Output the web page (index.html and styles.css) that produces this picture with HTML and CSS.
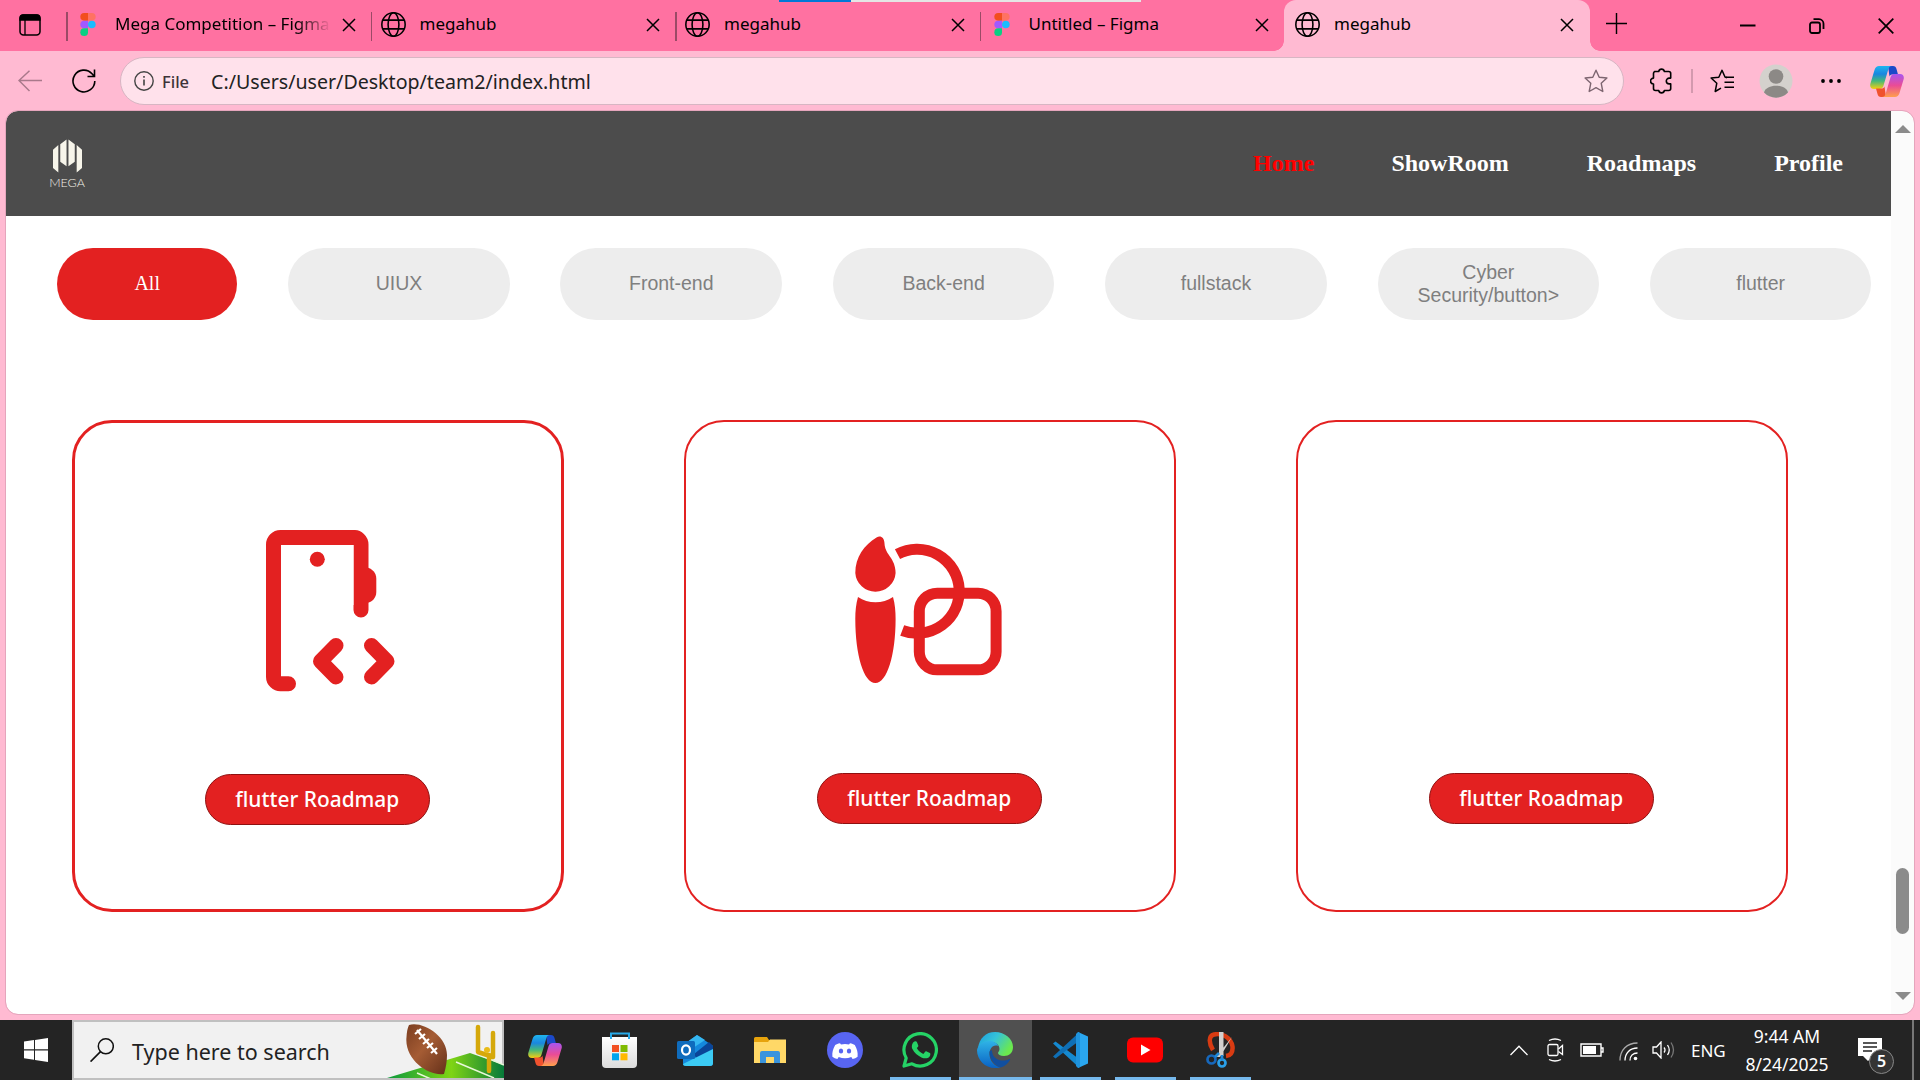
FILE: index.html
```html
<!DOCTYPE html>
<html lang="en">
<head>
<meta charset="utf-8">
<title>megahub</title>
<link rel="stylesheet" href="styles.css">
</head>
<body>
<svg class="defs" width="0" height="0">
  <defs>
    <linearGradient id="cpA" x1="0" y1="0" x2="0" y2="1"><stop offset="0" stop-color="#1fb5ee"/><stop offset=".35" stop-color="#1a86e0"/><stop offset=".65" stop-color="#44b87a"/><stop offset="1" stop-color="#f6cf10"/></linearGradient>
    <linearGradient id="cpB" x1="0" y1="0" x2="0" y2="1"><stop offset="0" stop-color="#a855f0"/><stop offset=".5" stop-color="#ea4c96"/><stop offset="1" stop-color="#ffa04c"/></linearGradient>
    <linearGradient id="edA" x1="0" y1="0" x2="1" y2=".5"><stop offset="0" stop-color="#1b9de0"/><stop offset=".5" stop-color="#35c3d8"/><stop offset="1" stop-color="#6be94e"/></linearGradient>
    <linearGradient id="edB" x1="0" y1="0" x2="0" y2="1"><stop offset="0" stop-color="#2fb3e6"/><stop offset="1" stop-color="#0a62c4"/></linearGradient>
    <linearGradient id="ball" x1="0" y1="0" x2="1" y2="1"><stop offset="0" stop-color="#7a3d20"/><stop offset=".45" stop-color="#a55c34"/><stop offset="1" stop-color="#64301a"/></linearGradient>
    <linearGradient id="field" x1="0" y1="0" x2="1" y2="0"><stop offset="0" stop-color="#0c9a3c"/><stop offset=".55" stop-color="#7fd414"/><stop offset="1" stop-color="#067a3a"/></linearGradient>
    <linearGradient id="bag" x1="0" y1="0" x2="0" y2="1"><stop offset="0" stop-color="#fff"/><stop offset="1" stop-color="#dcdcdc"/></linearGradient>
    <symbol id="globe" viewBox="0 0 24 24"><g fill="none" stroke="currentColor" stroke-width="1.5"><circle cx="12" cy="12" r="11.2"/><ellipse cx="12" cy="12" rx="5.2" ry="11.2"/><path d="M1.8 7.8h20.4M1.8 16.2h20.4"/></g></symbol>
    <symbol id="cross" viewBox="0 0 14 14"><path d="M1 1l12 12M13 1L1 13" fill="none" stroke="currentColor" stroke-width="1.5"/></symbol>
    <symbol id="figma" viewBox="0 0 16 24"><path d="M8 0H4a4 4 0 000 8h4z" fill="#f24e1e"/><path d="M8 0h4a4 4 0 010 8H8z" fill="#ff7262"/><path d="M8 8H4a4 4 0 000 8h4z" fill="#a259ff"/><circle cx="12" cy="12" r="4" fill="#1abcfe"/><path d="M8 16H4a4 4 0 104 4z" fill="#0acf83"/></symbol>
    <symbol id="copilot" viewBox="0 0 34 31"><path d="M18 0h5c2 0 3 1 3.500 3l1.500 5.500h-5c-2 0-3 .5-3.500 2z" fill="#1b49c9"/><path d="M9 0h13c-2 0-3 1-3.600 3l-5 17c-.6 2-2 3-4 3H4C1 23-.3 21 .3 18L4.500 4C5.200 1.500 7 0 9 0z" fill="url(#cpA)"/><path d="M16 31h-5c-2 0-3-1-3.500-3L6 22.500h5c2 0 3-.5 3.500-2z" fill="#f0522e"/><path d="M25 31H12c2 0 3-1 3.600-3l5-17c.6-2 2-3 4-3H30c3 0 4.300 2 3.700 5l-4.200 14c-.7 2.500-2.500 4-4.500 4z" fill="url(#cpB)"/></symbol>
  </defs>
</svg>

<header class="tabstrip">
  <svg class="workspaces" viewBox="0 0 22 22"><rect x="1" y="1" width="20" height="20" rx="3.500" fill="none" stroke="#000" stroke-width="1.500"/><path d="M1 6V4a3 3 0 013-3h14a3 3 0 013 3v2zM6 6v15" stroke="#000" stroke-width="1.300"/></svg>
  <div class="tab"><svg class="fig"><use href="#figma"/></svg><span class="title fade">Mega Competition – Figma</span><svg class="x"><use href="#cross"/></svg></div>
  <div class="tab"><svg class="globe"><use href="#globe"/></svg><span class="title">megahub</span><svg class="x"><use href="#cross"/></svg></div>
  <div class="tab"><svg class="globe"><use href="#globe"/></svg><span class="title">megahub</span><svg class="x"><use href="#cross"/></svg></div>
  <div class="tab"><svg class="fig"><use href="#figma"/></svg><span class="title">Untitled – Figma</span><svg class="x"><use href="#cross"/></svg></div>
  <div class="tab active"><svg class="globe"><use href="#globe"/></svg><span class="title">megahub</span><svg class="x"><use href="#cross"/></svg></div>
  <svg class="plus" viewBox="0 0 22 22"><path d="M11 0v22M0 11h22" stroke="#000" stroke-width="1.500"/></svg>
  <div class="window-buttons">
    <svg viewBox="0 0 16 16"><path d="M0 7.500h15.500" stroke="#000" stroke-width="2"/></svg>
    <svg viewBox="0 0 16 16"><g fill="none" stroke="#000" stroke-width="1.800"><rect x="1" y="4.500" width="10" height="10.500" rx="2"/><path d="M4.500 1.200H10a4.500 4.500 0 014.500 4.500V11"/></g></svg>
    <svg viewBox="0 0 16 16"><path d="M.7.700l14.600 14.600M15.300.700L.7 15.300" stroke="#000" stroke-width="1.700"/></svg>
  </div>
  <div class="progress"><i></i></div>
</header>

<div class="toolbar">
  <svg class="back" viewBox="0 0 24 22"><path d="M24 10.500H1M11.500.700L1 10.500l10.500 10.500" fill="none" stroke="#a9798b" stroke-width="1.500"/></svg>
  <svg class="reload" viewBox="0 0 24 24"><path d="M22.800 12A10.900 10.900 0 1120 4.700l2 2.300M22.500.500v7h-7" fill="none" stroke="#000" stroke-width="1.600"/></svg>
  <div class="address">
    <svg class="info" viewBox="0 0 20 20"><circle cx="10" cy="10" r="9.200" fill="none" stroke="#444" stroke-width="1.400"/><path d="M10 8.500v6M10 5v1.700" stroke="#444" stroke-width="1.600"/></svg>
    <span class="scheme">File</span>
    <span class="url">C:/Users/user/Desktop/team2/index.html</span>
    <svg class="star" viewBox="0 0 24 24"><path d="M12 1.200l3.200 7 7.700.8-5.700 5.200 1.600 8.300-6.800-3.800-6.800 3.800 1.600-8.300L1.100 9l7.700-.8z" fill="none" stroke="#7d6570" stroke-width="1.400" stroke-linejoin="round"/></svg>
  </div>
  <svg class="puzzle" viewBox="0 0 22 28"><path d="M4.500 4.500h4.200a2.900 2.900 0 015.700 0h4.300a2 2 0 012 2v4.600h-1.500a2.900 2.900 0 000 5.800h1.500v4.600a2 2 0 01-2 2h-4.300a2.900 2.900 0 01-5.700 0H5.500a2 2 0 01-2-2V17a2.900 2.900 0 010-5.900V6.500a2 2 0 012-2z" fill="none" stroke="#000" stroke-width="1.600" stroke-linejoin="round"/></svg>
  <i class="sep"></i>
  <svg class="favs" viewBox="0 0 24 24"><g fill="none" stroke="#000" stroke-width="1.500" stroke-linejoin="round"><path d="M17 8.800L15 8 12 1.200 8.800 8.200 1.100 9l5.700 5.200L5.200 22.500l5.800-3.300"/><path d="M16 8.200h8M14.500 13.200H24M14.500 18.200H24"/></g></svg>
  <svg class="avatar" viewBox="0 0 34 34"><circle cx="17" cy="17" r="16.500" fill="#d4d1cd"/><circle cx="17" cy="12.500" r="7.300" fill="#8c8986"/><path d="M5 28.500c2-9 22-9 24 0a16.500 16.500 0 01-24 0z" fill="#8c8986"/></svg>
  <svg class="dots" viewBox="0 0 20 4"><circle cx="2" cy="2" r="1.900"/><circle cx="10" cy="2" r="1.900"/><circle cx="18" cy="2" r="1.900"/></svg>
  <svg class="cp"><use href="#copilot"/></svg>
</div>

<main class="viewport">
  <div class="page">
    <nav class="navbar">
      <div class="logo">
        <svg viewBox="0 0 30 34"><path d="M0 10.500l5.500-4.800V34L0 29.500zM7.500 4.800L14 0v27.500L7.500 23zM16 0l6.500 4.800V23L16 27.500zM24.500 5.700l5.500 4.800v19L24.500 34z" fill="#f7f5ea"/></svg>
        <span>MEGA</span>
      </div>
      <div class="links"><a class="current">Home</a><a>ShowRoom</a><a>Roadmaps</a><a>Profile</a></div>
    </nav>
    <div class="filters">
      <button class="all">All</button>
      <button>UIUX</button>
      <button>Front-end</button>
      <button>Back-end</button>
      <button>fullstack</button>
      <button class="two-line">Cyber<br>Security/button&gt;</button>
      <button>flutter</button>
    </div>
    <div class="cards">
      <section class="card hover">
        <svg class="art" viewBox="0 0 162 162"><g fill="none" stroke="#e32121" stroke-width="15" stroke-linecap="round" stroke-linejoin="round"><path d="M38.500 153.700h-7.500a7 7 0 01-7.500-7V14.500a7 7 0 017-7h73a7 7 0 017.500 7V80"/><path d="M86 115.500L70.500 131.200 86 147M121.500 115.500l15.500 15.700L121.500 147"/></g><path d="M31 15h72.500v60H31z" fill="#fff"/><path d="M31 75h20v71H31z" fill="#fff"/><circle cx="67.300" cy="29.300" r="7.500" fill="#e32121"/><path d="M117 37.500c5 1 9.300 5.500 9.300 11v13.500c0 6-4.300 10-9.300 11z" fill="#e32121"/></svg>
        <button>flutter Roadmap</button>
      </section>
      <section class="card">
        <svg class="art" viewBox="0 0 162 162"><g fill="#e32121"><path d="M21.500 7.500c4-2.500 7.500 0 7.900 5 .3 9 5 12 8 18 2.500 4.500 3.200 9 3.200 12.500a20.200 20.200 0 01-40.300 0c0-16 9-28 21.200-35.500z"/><path d="M3 67c10 7 25 7 35 0 2 7 2.600 14 2.600 22 0 36-8.500 64-20.200 64S.3 125 .3 89c0-8 .7-15 2.700-22z"/></g><g fill="none" stroke="#e32121" stroke-width="11"><path d="M42.500 24.200A42 42 0 1147.200 100.500"/><rect x="64.300" y="63.200" width="76.800" height="76.600" rx="18"/></g></svg>
        <button>flutter Roadmap</button>
      </section>
      <section class="card">
        <div class="art"></div>
        <button>flutter Roadmap</button>
      </section>
    </div>
  </div>
  <div class="scrollbar">
    <svg viewBox="0 0 16 8"><path d="M0 8L8 0l8 8z" fill="#8b8b8b"/></svg>
    <i></i>
    <svg viewBox="0 0 16 8"><path d="M0 0h16L8 8z" fill="#8b8b8b"/></svg>
  </div>
</main>

<footer class="taskbar">
  <div class="start"><svg viewBox="0 0 24 24"><path d="M0 3.500l10-1.400v9.200H0zM11 2l13-2v11.300H11zM0 12.400h10v9.300L0 20.300zM11 12.400h13V24l-13-2z" fill="#fff"/></svg></div>
  <div class="search">
    <svg class="lens" viewBox="0 0 24 24"><circle cx="15.800" cy="8.300" r="7.500" fill="none" stroke="#111" stroke-width="1.500"/><path d="M10.500 13.600L.5 23.600" stroke="#111" stroke-width="1.700"/></svg>
    <span>Type here to search</span>
    <svg class="doodle" viewBox="0 0 117 56"><path d="M0 56L83 31l34 12v13z" fill="url(#field)"/><path d="M30 51l14 6M69 40l38 16M93 33l24 10" stroke="#e8f8d8" stroke-width="1.500"/><g fill="none" stroke="#d5a80a" stroke-width="4.500" stroke-linecap="round" stroke-linejoin="round"><path d="M91 5v25l15 5V11M102 33v16"/></g><circle cx="100" cy="28" r="3" fill="#e8bb18"/><path d="M22 3C36-1 60 14 60 33c0 6-1 12-3 19C44 55 17 39 19.500 15c.3-5 1-9 2.500-12z" fill="url(#ball)"/><path d="M30 8l20 24M28 12l6-5M32 17l6-5M36 22l6-5M40 26l6-5M44 31l6-5" stroke="#fff" stroke-width="2.200"/></svg>
  </div>
  <div class="apps">
    <div><svg viewBox="0 0 36 36"><use href="#copilot" x="1" y="3" width="34" height="31"/></svg></div>
    <div><svg viewBox="0 0 36 36"><path d="M9 7V1.500h18V7" fill="none" stroke="#29aae8" stroke-width="2"/><path d="M0 5h35v27a4 4 0 01-4 4H4a4 4 0 01-4-4z" fill="url(#bag)"/><path d="M9 7V2M27 7V2" stroke="#29aae8" stroke-width="2"/><path d="M10 13h7v7h-7z" fill="#f25022"/><path d="M18.500 13h7v7h-7z" fill="#7fba00"/><path d="M10 21.300h7v7h-7z" fill="#00a4ef"/><path d="M18.500 21.300h7v7h-7z" fill="#ffb900"/></svg></div>
    <div><svg viewBox="0 0 36 36"><path d="M6 13L20 3l16 11v17a3 3 0 01-3 3H9a3 3 0 01-3-3z" fill="#1489dd"/><path d="M6 13L20 3l8 5L10 20z" fill="#35b7f1"/><path d="M17 22l15-12 4 4v4L20 28z" fill="#0a4598"/><path d="M36 17v14a3 3 0 01-3 3H9c-2 0-3-1-3-2z" fill="#3ccbf4"/><rect y="9" width="18" height="18" rx="1.500" fill="#0f6cbd"/><ellipse cx="9" cy="18" rx="4" ry="4.700" fill="none" stroke="#fff" stroke-width="2.200"/></svg></div>
    <div><svg viewBox="0 0 36 36"><path d="M2 6.500a1.500 1.500 0 011.500-1.500H15l2 3h16.500v22H2z" fill="#e7a30c"/><path d="M2 10h14l2-2.500h16V31H2z" fill="#ffd867"/><path d="M8 31V21a2 2 0 012-2h16a2 2 0 012 2v10h-6v-6h-8v6z" fill="#3a94dc"/></svg></div>
    <div><svg viewBox="0 0 36 36"><circle cx="18" cy="18" r="18" fill="#5865f2"/><path d="M13 11.200l1 1.300a20 20 0 018 0l1-1.300c2 .3 3.500 1 4.800 1.900 2.300 3.900 3.200 7.500 2.800 11.600a13 13 0 01-5 2.300l-1.300-2a16 16 0 01-12.600 0l-1.300 2a13 13 0 01-5-2.300c-.4-4.100.5-7.700 2.800-11.600 1.300-.9 2.800-1.600 4.800-1.900z" fill="#fff"/><ellipse cx="14" cy="19" rx="2.200" ry="2.500" fill="#5865f2"/><ellipse cx="22" cy="19" rx="2.200" ry="2.500" fill="#5865f2"/></svg></div>
    <div class="running"><svg viewBox="0 0 36 36"><path d="M2 34l2.200-8A16.200 16.200 0 1110 31.800z" fill="none" stroke="#25d366" stroke-width="3.200" stroke-linejoin="round"/><path d="M12.500 9.500c1-.5 2-.3 2.400.6l1.400 3.300c.3 1-.9 2-1.500 2.700 1.500 2.800 3.600 4.600 6.500 5.900l1.900-2.300c.5-.5 1-.5 1.500-.3l3.200 1.600c.8.4.6 2.500-.5 3.800-1.600 1.900-5 2-8 .6-4-1.800-7-4.600-9-8.400-1.200-2.600-.3-6.300 2.100-7.500z" fill="#25d366"/></svg></div>
    <div class="running focus"><svg viewBox="0 0 36 36"><path d="M1 17C2 6 9 0 18 0c10 0 18 7 18 15 0 6-4 9-9 9-4 0-6-1.500-6-3 0-1 1.500-1.500 1.500-4C22.500 13 19 10 14 10 8 10 3 13 1 17z" fill="url(#edA)"/><path d="M0 18c1-5 6-9 12-9 5 0 8 2 9.500 5-6-2-9 3-9 8 0 7 5 12 11 13.500-2 .5-3.500.5-5.500.5C8 36 0 28 0 18z" fill="url(#edB)"/><path d="M12.500 20c0 8 6 14 11 15.500 4-1 7.500-4 9.500-7.500.4-.8-.3-1.200-1-.8-6 3-17 1-17-9-1.500 0-2.500 1-2.500 1.800z" fill="#114f9f"/></svg></div>
    <div class="running"><svg viewBox="0 0 36 36"><path d="M1 11.500l2.500-2L27 27v8.500z" fill="#1589d0"/><path d="M1 24.500l2.500 2L27 9V.500z" fill="#0f6fb5"/><path d="M26 0l10 4.500v27L26 36z" fill="#2aa7f0"/><path d="M26 0l2 1v34l-2 1-2-2V2z" fill="#1f93dd"/></svg></div>
    <div class="running"><svg viewBox="0 0 36 36"><rect y="5.500" width="36" height="25" rx="6" fill="#f00"/><path d="M14 12.500v11l9.500-5.500z" fill="#fff"/></svg></div>
    <div class="running"><svg viewBox="0 0 36 36"><path d="M11 18C7 12 6 4 12 2.500c8-2 17 3 18.500 12 .5 6-2 9-6.500 9.500" fill="none" stroke="#d83b12" stroke-width="4.500"/><path d="M17 0h4.500v24H17zM30 5L18 25h-4z" fill="#d2d0ce"/><circle cx="9.500" cy="27.500" r="4" fill="none" stroke="#1668bd" stroke-width="2.700"/><circle cx="20" cy="31" r="3.500" fill="none" stroke="#2a9fe8" stroke-width="2.700"/><path d="M13 25l4-4M20 28v-5" stroke="#1f88d8" stroke-width="2.700"/></svg></div>
  </div>
  <div class="tray">
    <svg class="chev" viewBox="0 0 18 11"><path d="M.5 10L9 1.200 17.500 10" fill="none" stroke="#fff" stroke-width="1.300"/></svg>
    <svg class="meet" viewBox="0 0 18 24"><g fill="none" stroke="#fff" stroke-width="1.300"><rect x="1" y="6.500" width="10" height="11" rx="1.500"/><path d="M11.500 11l4-3.500v9l-4-3M2 2.500Q8-.5 14 2.500M2 21.500q6 3 12 0"/></g></svg>
    <svg class="batt" viewBox="0 0 24 14"><path d="M1 1h20v12H1zM21 5h2v4h-2" fill="none" stroke="#fff" stroke-width="1.400"/><path d="M3 3h13v8H3z" fill="#fff"/></svg>
    <svg class="wifi" viewBox="0 0 19 19"><g fill="none" stroke="#fff" stroke-width="1.300"><path d="M1 18.500C1 8 8 1 18.500 1" stroke="#aaa"/><path d="M6 18.500C6 11 11 6 18.500 6M11 18.500c0-4.500 3-7.500 7.500-7.500" /></g><circle cx="16.500" cy="16.500" r="1.800" fill="#fff"/></svg>
    <svg class="vol" viewBox="0 0 23 18"><g fill="none" stroke="#fff" stroke-width="1.300"><path d="M1 6h3.500L9 1v16l-4.500-5H1zM12 6.500q2 2.500 0 5M15.500 4q3.500 5 0 10"/><path d="M19 1.500q5 7.500 0 15" stroke="#777"/></g></svg>
    <span class="lang">ENG</span>
    <div class="clock"><span>9:44 AM</span><span>8/24/2025</span></div>
    <div class="notice"><svg viewBox="0 0 24 24"><path d="M0 0h24v18H15l-5 5-5-5H0z" fill="#fff"/><path d="M5 5h14M5 9h14M5 13h9" stroke="#222" stroke-width="1.300"/></svg><b>5</b></div>
    <i class="peek"></i>
  </div>
</footer>
</body>
</html>
```
FILE: styles.css
```css
* { box-sizing: border-box; }
body {
  margin: 0;
  width: 1920px;
  height: 1080px;
  overflow: hidden;
  display: flex;
  flex-direction: column;
  background: #ffbad2;
  font-family: "Noto Sans", "Open Sans", sans-serif;
  color: #000;
}
svg { display: block; flex: none; }
.defs { position: absolute; }
button { font: inherit; border: 0; padding: 0; }

/* Tab strip */
.tabstrip {
  position: relative;
  height: 51px;
  flex: none;
  display: flex;
  align-items: center;
  background: #ff71a1;
  padding-bottom: 2px;
}
.workspaces { width: 22px; height: 22px; margin: 0 25px 0 19px; }
.tab {
  position: relative;
  width: 304.500px;
  height: 49px;
  display: flex;
  align-items: center;
  padding: 0 15px 0 10px;
}
.tab::before {
  content: "";
  position: absolute;
  left: 0;
  top: 12px;
  width: 1.500px;
  height: 29px;
  background: #9b4a66;
}
.fig { width: 16px; height: 23px; margin: 0 19px 0 4px; }
.globe { width: 25px; height: 25px; margin: -1px 14px 0 0; }
.title {
  flex: 1;
  font-size: 17px;
  line-height: 24px;
  white-space: nowrap;
  overflow: hidden;
  margin-top: -2px;
}
.fade { mask-image: linear-gradient(90deg, #000 84%, transparent); margin-right: 11px; }
.x { width: 14px; height: 14px; }
.tab.active {
  width: 306px;
  height: 51px;
  margin: 0 0 -2px 0;
  padding: 0 16px 2px 11px;
  background: #ffbad2;
  border-radius: 12px 12px 0 0;
}
.tab.active::before, .tab.active::after {
  content: "";
  position: absolute;
  top: auto;
  bottom: 0;
  left: -10px;
  width: 10px;
  height: 10px;
  background: radial-gradient(circle at 0 0, transparent 9.500px, #ffbad2 10px);
}
.tab.active::after { left: auto; right: -10px; background: radial-gradient(circle at 100% 0, transparent 9.500px, #ffbad2 10px); }
.plus { width: 21px; height: 21px; margin: -2px 0 0 16px; }
.window-buttons { display: flex; gap: 53px; margin: 2px 26px 0 auto; }
.window-buttons svg { width: 16px; height: 16px; }
.progress {
  position: absolute;
  left: 779px;
  top: 0;
  width: 362px;
  height: 2px;
  background: #e5e5e5;
}
.progress i { display: block; width: 72px; height: 2px; background: #0078d7; }

/* Toolbar */
.toolbar {
  height: 60px;
  flex: none;
  display: flex;
  align-items: center;
  padding-left: 18px;
}
.back { width: 24px; height: 22px; margin-right: 30px; }
.reload { width: 24px; height: 24px; margin-right: 24px; }
.address {
  width: 1504px;
  height: 48px;
  display: flex;
  align-items: center;
  border: 1.500px solid #d7b6c3;
  border-radius: 24px;
  background: #ffe1eb;
  padding: 0 15px 0 13px;
}
.info { width: 20px; height: 20px; margin-right: 8px; }
.scheme { width: 49px; font-size: 16.500px; font-weight: 500; color: #3d3338; }
.url { flex: 1; font-size: 19.600px; color: #222; }
.star { width: 24px; height: 24px; }
.puzzle { width: 22px; height: 28px; margin-left: 26px; }
.sep { width: 2px; height: 24px; margin: 0 17px 0 19px; background: #d399ae; }
.favs { width: 24px; height: 24px; }
.avatar { width: 34px; height: 34px; margin-left: 25px; }
.dots { width: 20px; height: 4px; margin: 0 29px 0 28px; }
.cp { width: 34px; height: 31px; }

/* Browser viewport */
.viewport {
  width: 1908px;
  height: 903px;
  margin: 0 6px 6px;
  flex: none;
  display: flex;
  overflow: hidden;
  border-radius: 12px;
  background: #fff;
  outline: 1px solid #e5a5bc;
}
.page { width: 1885px; }
.navbar {
  height: 105px;
  display: flex;
  align-items: center;
  justify-content: space-between;
  padding: 0 48px 0 43px;
  background: #4c4c4c;
}
.logo { display: flex; flex-direction: column; align-items: center; gap: 4px; width: 36px; }
.logo svg { width: 29px; height: 34px; }
.logo span { font: 300 12.500px/12px "Lato", sans-serif; color: #f3f1e8; }
.links { display: flex; gap: 78px; margin-top: -2px; font: bold 24px/28px "Liberation Serif", serif; color: #fff; }
.links .current { color: #f00; margin-right: -1px; }
.filters { display: flex; gap: 50.750px; padding: 32px 0 0 51px; }
.filters button {
  width: 221.600px;
  height: 72px;
  flex: none;
  border-radius: 36px;
  background: #ededed;
  color: #7f7f7f;
  font: 19.500px/23px "Liberation Sans", sans-serif;
  padding-bottom: 2px;
}
.filters .two-line { padding-bottom: 0; }
.filters .all {
  width: 180.400px;
  background: #e32121;
  color: #fff;
  font: 20px/23px "Liberation Serif", serif;
}
.cards { display: flex; gap: 120px; padding: 100px 0 0 66px; }
.card {
  width: 492px;
  height: 492px;
  border: 2px solid #e32121;
  border-radius: 40px;
  padding-top: 108px;
  display: flex;
  flex-direction: column;
  align-items: center;
}
.card.hover { border-width: 3px; }
.art { width: 162px; height: 162px; margin-bottom: 81px; }
.card:nth-child(1) .art { margin: -1px 0 82px 25px; }
.card:nth-child(2) .art { margin-left: 12px; }
.card button {
  width: 225px;
  height: 51px;
  margin-right: 1.500px;
  border: 1px solid #8f1010;
  border-radius: 26px;
  background: #e32121;
  color: #fff;
  font-size: 20.900px;
  font-weight: 500;
  padding-bottom: 2px;
}
.scrollbar {
  width: 23px;
  display: flex;
  flex-direction: column;
  align-items: center;
  padding: 14px 0;
  background: #fbfbfb;
}
.scrollbar svg { width: 16px; height: 8px; }
.scrollbar i { width: 13px; height: 66px; margin: 735px 0 58px; border-radius: 7px; background: #8b8b8b; }

/* Taskbar */
.taskbar { height: 60px; flex: none; display: flex; background: #242424; color: #fff; }
.start { width: 72px; display: grid; place-items: center; }
.start svg { width: 24px; height: 24px; }
.search {
  width: 432px;
  display: flex;
  align-items: center;
  border: 2px solid #c0c0c0;
  background: #f1f1f1;
  padding-left: 16px;
  color: #222;
}
.lens { width: 24px; height: 24px; }
.search span { width: 273px; padding-left: 18px; font-size: 21.500px; white-space: nowrap; padding-top: 2px; }
.doodle { width: 117px; height: 56px; margin-right: -2px; }
.apps { display: flex; gap: 2px; padding-left: 5px; }
.apps div { width: 73px; height: 60px; display: grid; place-items: center; }
.apps svg { width: 36px; height: 36px; margin-left: -2px; }
.running { background: linear-gradient(#76b9ed, #76b9ed) center bottom / 61px 3px no-repeat; }
.focus { background: linear-gradient(#76b9ed, #76b9ed) center bottom / 73px 3px no-repeat #505050; }
.tray { flex: 1; display: flex; align-items: center; justify-content: flex-end; }
.chev { width: 18px; height: 11px; margin-right: 19px; }
.meet { width: 18px; height: 24px; margin-right: 15px; }
.batt { width: 24px; height: 14px; margin-right: 15px; }
.wifi { width: 19px; height: 19px; margin: 3px 14px 0 0; }
.vol { width: 23px; height: 18px; margin-right: 16px; }
.lang { width: 36px; font-size: 17px; }
.clock {
  width: 120px;
  display: flex;
  flex-direction: column;
  align-items: center;
  font-size: 17.500px;
  line-height: 28px;
}
.notice { position: relative; width: 37px; height: 37px; margin: 12px 17px 0 11px; }
.notice svg { width: 24px; height: 24px; }
.notice b {
  position: absolute;
  left: 11px;
  top: 11px;
  width: 25px;
  height: 25px;
  border: 1px solid #888;
  border-radius: 50%;
  background: #343434;
  text-align: center;
  font-size: 16px;
  font-weight: 600;
  line-height: 23px;
}
.peek { width: 2px; height: 60px; margin-right: 6px; background: #777; }
```
